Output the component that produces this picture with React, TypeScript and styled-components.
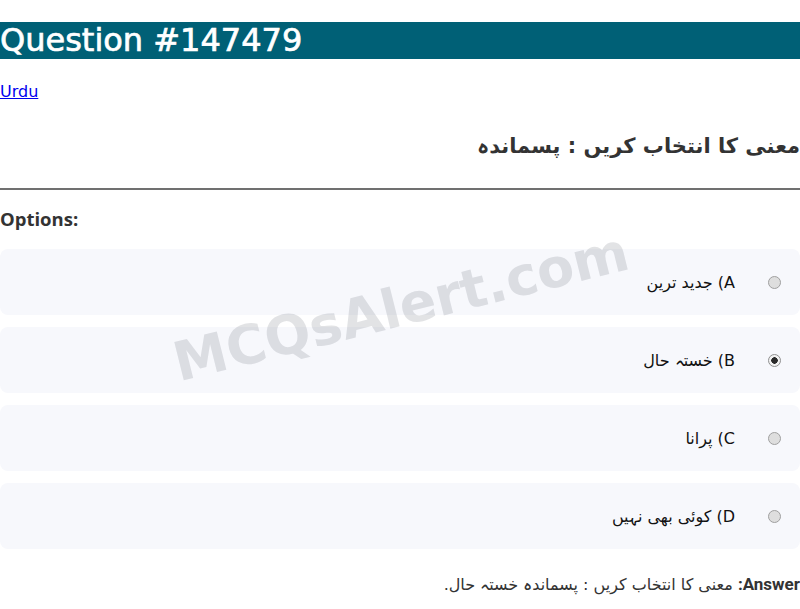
import React from 'react';
import styled, { createGlobalStyle } from 'styled-components';

const GlobalStyle = createGlobalStyle`
  body {
    margin: 0;
    font-family: 'DejaVu Sans', sans-serif;
    color: #333;
    background: #fff;
  }
`;

const Page = styled.div`
  position: relative;
  overflow: hidden;
  padding-top: 22px;
`;

const Title = styled.h1`
  margin: 0;
  height: 37px;
  line-height: 37px;
  background: #006076;
  color: #fff;
  font-size: 32px;
  font-weight: normal;
  -webkit-text-stroke: 0.7px #fff;
  font-family: 'DejaVu Sans', sans-serif;
`;

const CategoryLink = styled.a`
  display: inline-block;
  margin-top: 23px;
  font-size: 16px;
  color: #0000ee;
  text-decoration: underline;
`;

const QuestionText = styled.h2`
  margin: 30px 0 0;
  direction: rtl;
  text-align: right;
  font-size: 21px;
  line-height: 30px;
  font-weight: bold;
  color: #333;
`;

const Divider = styled.hr`
  margin: 27px 0 0;
  border: 0;
  border-top: 2px solid #707070;
`;

const SectionLabel = styled.div`
  margin-top: 17px;
  font-family: 'Open Sans', sans-serif;
  font-weight: bold;
  font-size: 18.5px;
  line-height: 24px;
  color: #333;
`;

const OptionList = styled.div`
  margin-top: 18px;
  display: flex;
  flex-direction: column;
  gap: 12px;
`;

const OptionCard = styled.label`
  display: flex;
  direction: rtl;
  align-items: center;
  gap: 33px;
  height: 66px;
  padding: 0 19px;
  background: #f7f8fc;
  border-radius: 8px;
  font-size: 16px;
  color: #111;
`;

const Radio = styled.input`
  appearance: none;
  box-sizing: border-box;
  width: 13px;
  height: 13px;
  margin: 0;
  border-radius: 50%;
  border: 1px solid #a0a0a0;
  background: #dedede;

  &:checked {
    background: radial-gradient(circle, #2a2a2a 0 3px, #f2f2f2 3.5px 100%);
    border-color: #909090;
  }
`;

const AnswerLine = styled.p`
  margin: 25px 0 0;
  direction: rtl;
  text-align: right;
  font-size: 16px;
  line-height: 20px;
  color: #333;
`;

const AnswerLabel = styled.b`
  font-family: Roboto, sans-serif;
  font-size: 17px;
`;

const Watermark = styled.div`
  position: absolute;
  left: 401px;
  top: 307px;
  transform: translate(-50%, -50%) rotate(-14deg);
  font-size: 54px;
  font-weight: bold;
  color: rgba(60, 64, 80, 0.15);
  white-space: nowrap;
  pointer-events: none;
`;

const options = [
  { key: 'A', text: 'جدید ترین' },
  { key: 'B', text: 'خستہ حال' },
  { key: 'C', text: 'پرانا' },
  { key: 'D', text: 'کوئی بھی نہیں' },
];

const App = () => {
  return (
    <>
      <GlobalStyle />
      <Page>
        <Title>Question #147479</Title>
        <CategoryLink href="#">Urdu</CategoryLink>
        <QuestionText>معنی کا انتخاب کریں : پسماندہ</QuestionText>
        <Divider />
        <SectionLabel>Options:</SectionLabel>
        <OptionList>
          {options.map((item) => (
            <OptionCard key={item.key}>
              <Radio type="radio" name="opt" disabled checked={item.key === 'B'} readOnly />
              <span>
                {item.key}) {item.text}
              </span>
            </OptionCard>
          ))}
        </OptionList>
        <AnswerLine>
          <AnswerLabel>Answer:</AnswerLabel> معنی کا انتخاب کریں : پسماندہ خستہ حال.
        </AnswerLine>
        <Watermark>MCQsAlert.com</Watermark>
      </Page>
    </>
  );
};

export default App;
